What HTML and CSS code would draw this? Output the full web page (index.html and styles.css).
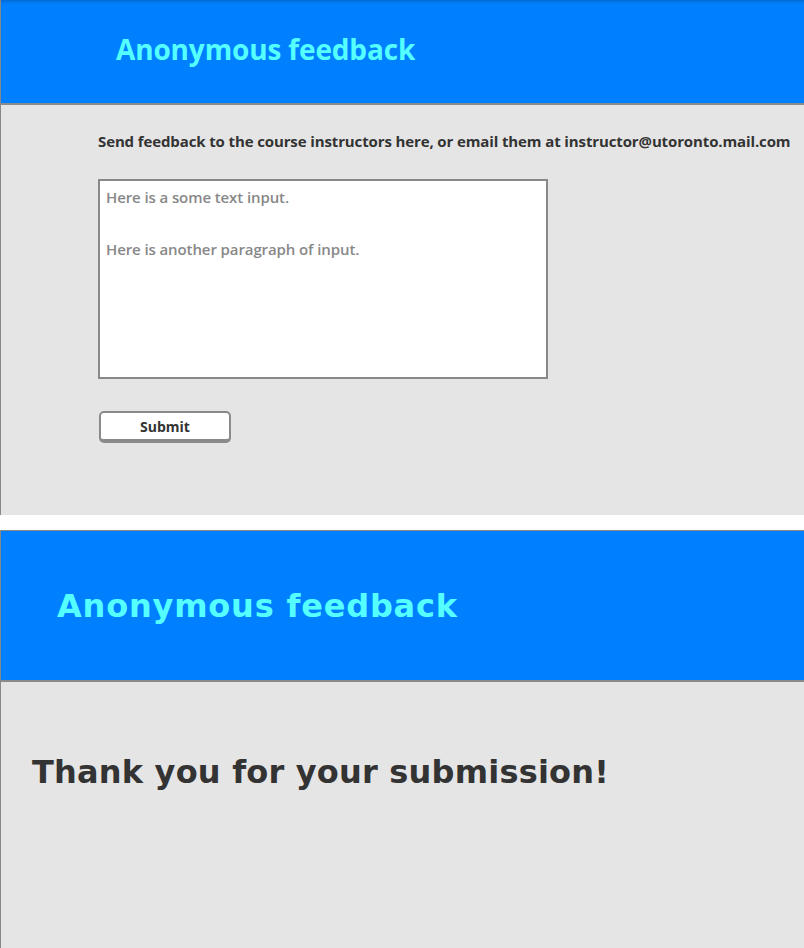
FILE: index.html
```html
<!DOCTYPE html>
<html>
<head>
<meta charset="utf-8">
<link rel="stylesheet" href="styles.css">
</head>
<body>
<section class="panel panel-form">
  <header class="bar bar-one">
    <h1 class="title title-one">Anonymous feedback</h1>
  </header>
  <div class="content content-form">
    <p class="intro">Send feedback to the course instructors here, or email them at instructor@utoronto.mail.com</p>
    <div class="textbox">
      <p class="para">Here is a some text input.</p>
      <p class="para">Here is another paragraph of input.</p>
    </div>
    <button class="submit" type="button">Submit</button>
  </div>
</section>
<div class="gap"></div>
<section class="panel panel-thanks">
  <header class="bar bar-two">
    <h1 class="title title-two">Anonymous feedback</h1>
  </header>
  <div class="content content-thanks">
    <h2 class="thanks">Thank you for your submission!</h2>
  </div>
</section>
</body>
</html>
```
FILE: styles.css
```css
html, body {
  margin: 0;
  padding: 0;
  background: #ffffff;
}
body {
  width: 804px;
  height: 948px;
  overflow: hidden;
  font-family: "Open Sans", "Lato", sans-serif;
}
.panel {
  background: #e5e5e5;
  border-left: 1px solid #888888;
  display: flex;
  flex-direction: column;
}
.panel-form {
  height: 515px;
}
.gap {
  height: 15px;
  background: #ffffff;
}
.panel-thanks {
  height: 418px;
}
.bar {
  background: #0080ff;
  border-bottom: 2px solid #8a8a8a;
  display: flex;
  align-items: center;
  box-sizing: border-box;
}
.bar-one {
  height: 105px;
  padding-left: 115px;
  background: linear-gradient(to bottom, #0068d0 0px, #0078ee 2px, #0080ff 5px, #0080ff 100%);
}
.bar-two {
  height: 152px;
  padding-left: 56px;
  border-top: 1px solid #8a8a8a;
}
.title {
  margin: 0;
  color: #55ffff;
  font-weight: 700;
}
.title-one {
  font-family: "Open Sans", sans-serif;
  font-size: 28px;
  letter-spacing: -0.15px;
  margin-top: -6px;
}
.title-two {
  font-family: "DejaVu Sans", sans-serif;
  font-size: 32px;
  letter-spacing: 0.8px;
  margin-top: 1px;
}
.content-form {
  padding-left: 97px;
  padding-top: 26px;
}
.intro {
  margin: 0;
  font-size: 15px;
  font-weight: 700;
  color: #333333;
  white-space: nowrap;
  letter-spacing: -0.12px;
}
.textbox {
  margin-top: 28px;
  width: 450px;
  height: 200px;
  box-sizing: border-box;
  background: #ffffff;
  border: 2px solid #888888;
  padding: 6px 6px;
}
.para {
  margin: 0 0 32px 0;
  font-size: 15px;
  font-weight: 600;
  color: #888888;
  line-height: 20px;
  letter-spacing: -0.1px;
}
.submit {
  margin-top: 32px;
  width: 132px;
  height: 32px;
  margin-left: 1px;
  box-sizing: border-box;
  background: #ffffff;
  border: 2px solid #8a8a8a;
  border-bottom-width: 4px;
  border-radius: 5px;
  font-family: "Open Sans", sans-serif;
  font-weight: 700;
  font-size: 14px;
  color: #333333;
  padding: 0;
}
.content-thanks {
  padding-left: 31px;
  padding-top: 71px;
}
.thanks {
  margin: 0;
  font-family: "DejaVu Sans", sans-serif;
  font-size: 32px;
  font-weight: 700;
  color: #333333;
  letter-spacing: 0.2px;
}
```
